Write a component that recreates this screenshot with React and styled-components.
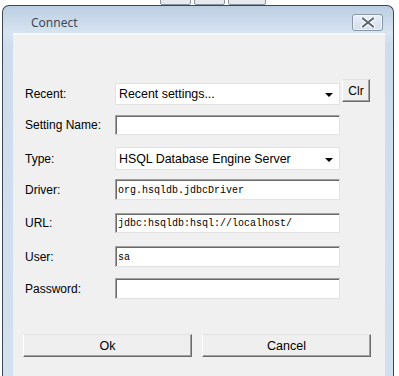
import styled, { createGlobalStyle } from "styled-components";

const GlobalStyle = createGlobalStyle`
  html, body {
    margin: 0;
    padding: 0;
    background: #ffffff;
    overflow: hidden;
  }
  body {
    font-family: "Liberation Sans", Arial, sans-serif;
  }
`;

const Page = styled.div`
  width: 399px;
  height: 376px;
  overflow: hidden;
`;

// bits of the app toolbar peeking out above the dialog
const Toolbar = styled.div`
  display: flex;
  height: 5px;
  padding-left: 160px;
  gap: 3px;
  overflow: hidden;
`;

const ToolButton = styled.div`
  width: ${(p) => p.$w}px;
  height: 12px;
  margin-top: -7px;
  background: #e6eaef;
  border: 1px solid #8d949e;
  border-radius: 2px;
  box-sizing: border-box;
`;

const Window = styled.div`
  margin-left: 2px;
  width: 392px;
  box-sizing: border-box;
  border: 1px solid #3d4754;
  border-bottom: none;
  border-radius: 7px 7px 0 0;
  background: linear-gradient(#bccee2 0px, #d7e4f1 27px, #cfdcec 40px, #d3e0ee 100%);
  padding: 0 8px 0 10px;
`;

const TitleBar = styled.div`
  height: 27px;
  box-sizing: border-box;
  padding-top: 5px;
  display: flex;
  align-items: center;
  justify-content: space-between;
`;

const Title = styled.div`
  margin-left: 18px;
  font-family: "Noto Sans", "Open Sans", sans-serif;
  font-size: 12px;
  color: #3f4855;
`;

const CloseButton = styled.div`
  width: 31px;
  height: 17px;
  margin-right: 2px;
  box-sizing: border-box;
  border: 1px solid #8796a8;
  border-radius: 3px;
  background: linear-gradient(#e9eff6, #d3dde9);
  box-shadow: inset 0 0 0 1px rgba(255, 255, 255, 0.6);
  display: flex;
  align-items: center;
  justify-content: center;
`;

const Content = styled.div`
  background: #f0f0f0;
  height: 360px;
  box-sizing: border-box;
  padding: 48px 0 0 12px;
  border-top: 2px solid #f6f7f8;
`;

const Row = styled.div`
  display: grid;
  grid-template-columns: 90px 225px auto;
  align-items: center;
  height: ${(p) => p.$h}px;
  margin-top: ${(p) => p.$mt}px;
`;

const Label = styled.div`
  font-size: 12px;
  color: #000;
`;

const Combo = styled.div`
  height: 100%;
  box-sizing: border-box;
  background: #ffffff;
  border: 1px solid #e2e2e2;
  display: flex;
  align-items: center;
  justify-content: space-between;
  padding: 0 6px 0 3px;
  font-size: 12.4px;
  color: #000;
`;

const Arrow = styled.span`
  width: 0;
  height: 0;
  border-left: 4px solid transparent;
  border-right: 4px solid transparent;
  border-top: 4px solid #000;
  margin-top: 2px;
`;

const TextField = styled.div`
  height: 100%;
  box-sizing: border-box;
  background: #ffffff;
  border: 1px solid;
  border-color: #a0a0a0 #e3e3e3 #e3e3e3 #a0a0a0;
  box-shadow: inset 1px 1px 0 #6b6b6b;
  padding: 1px 0 0 2px;
  display: flex;
  align-items: center;
  font-family: "Liberation Mono", "Courier New", monospace;
  font-size: 10px;
  color: #000;
`;

const RaisedButton = styled.div`
  box-sizing: border-box;
  background: #efefef;
  border: 1px solid;
  border-color: #e3e3e3 #6b6b6b #6b6b6b #ffffff;
  box-shadow: inset -1px -1px 0 #a0a0a0;
  display: flex;
  align-items: center;
  justify-content: center;
  font-size: 12.5px;
  color: #000;
`;

const ClrButton = styled(RaisedButton)`
  width: 28px;
  height: 23px;
  margin-left: 2px;
  margin-top: -4px;
  align-self: start;
  font-size: 12px;
`;

const ButtonRow = styled.div`
  display: flex;
  gap: 10px;
  margin-top: 35px;
  margin-left: -2px;
`;

const DialogButton = styled(RaisedButton)`
  width: 169px;
  height: 23px;
`;

const CloseIcon = () => (
  <svg width="16" height="11" viewBox="0 0 16 11">
    <path d="M3 1.5 L13 9.5 M13 1.5 L3 9.5" stroke="#ffffff" strokeWidth="4.5" strokeLinecap="round" />
    <path d="M3 1.5 L13 9.5 M13 1.5 L3 9.5" stroke="#5d6877" strokeWidth="2.2" strokeLinecap="round" />
  </svg>
);

const App = () => {
  return (
    <Page>
      <GlobalStyle />
      <Toolbar>
        <ToolButton $w={31} />
        <ToolButton $w={31} />
        <ToolButton $w={38} />
      </Toolbar>
      <Window>
        <TitleBar>
          <Title>Connect</Title>
          <CloseButton>
            <CloseIcon />
          </CloseButton>
        </TitleBar>
        <Content>
          <Row $h={22} $mt={0}>
            <Label>Recent:</Label>
            <Combo>
              Recent settings...
              <Arrow />
            </Combo>
            <ClrButton>Clr</ClrButton>
          </Row>
          <Row $h={20} $mt={10}>
            <Label>Setting Name:</Label>
            <TextField />
          </Row>
          <Row $h={23} $mt={12}>
            <Label>Type:</Label>
            <Combo>
              HSQL Database Engine Server
              <Arrow />
            </Combo>
          </Row>
          <Row $h={21} $mt={9}>
            <Label>Driver:</Label>
            <TextField>org.hsqldb.jdbcDriver</TextField>
          </Row>
          <Row $h={20} $mt={13}>
            <Label>URL:</Label>
            <TextField>jdbc:hsqldb:hsql://localhost/</TextField>
          </Row>
          <Row $h={21} $mt={13}>
            <Label>User:</Label>
            <TextField>sa</TextField>
          </Row>
          <Row $h={21} $mt={11}>
            <Label>Password:</Label>
            <TextField />
          </Row>
          <ButtonRow>
            <DialogButton>Ok</DialogButton>
            <DialogButton>Cancel</DialogButton>
          </ButtonRow>
        </Content>
      </Window>
    </Page>
  );
};

export default App;
